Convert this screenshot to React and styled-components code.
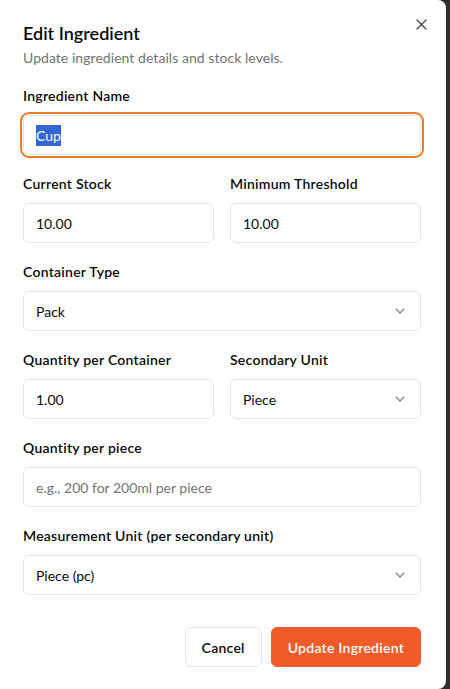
import React from "react";
import styled, { createGlobalStyle } from "styled-components";

const Global = createGlobalStyle`
  html, body { margin: 0; padding: 0; height: 100%; overflow: hidden; }
  body { background: #2e2e2e; font-family: Lato, "Liberation Sans", sans-serif; }
  * { box-sizing: border-box; }
`;

const Page = styled.div`
  display: flex;
  align-items: flex-start;
  height: 689px;
`;

const Dialog = styled.div`
  position: relative;
  width: 446px;
  height: 689px;
  background: #ffffff;
  border-radius: 0 8px 8px 0;
  padding: 24px 25px 22px 23px;
  display: flex;
  flex-direction: column;
`;

const Close = styled.button`
  position: absolute;
  top: 16px;
  right: 17px;
  width: 16px;
  height: 16px;
  padding: 0;
  border: 0;
  background: transparent;
  display: flex;
  align-items: center;
  justify-content: center;
  color: #4a4a4a;
  cursor: pointer;
`;

const Title = styled.h2`
  margin: 0;
  font-size: 18px;
  line-height: 18px;
  font-weight: 600;
  color: #0a0a0a;
`;

const Subtitle = styled.p`
  margin: 6px 0 0;
  font-size: 14px;
  line-height: 20px;
  color: #737373;
  letter-spacing: 0.05px;
`;

const Form = styled.div`
  margin-top: 18px;
  display: flex;
  flex-direction: column;
  gap: 19px;
`;

const Row = styled.div`
  display: grid;
  grid-template-columns: 1fr 1fr;
  gap: 16px;
`;

const Field = styled.div`
  display: flex;
  flex-direction: column;
  gap: 9px;
`;

const Label = styled.label`
  font-size: 14px;
  line-height: 20px;
  font-weight: 600;
  color: #0a0a0a;
  letter-spacing: 0.25px;
`;

const Box = styled.div`
  height: 40px;
  border: 1px solid #e5e5e5;
  border-radius: 6px;
  background: #fff;
  padding: 0 12px;
  display: flex;
  align-items: center;
  justify-content: space-between;
  font-size: 14px;
  color: ${(p) => (p.$placeholder ? "#737373" : "#0a0a0a")};
  box-shadow: ${(p) =>
    p.$focused ? "0 0 0 1px #fff, 0 0 0 3px #f07a1f" : "none"};
`;

const Selected = styled.span`
  background: #3367d1;
  color: #fff;
  line-height: 21px;
  display: inline-block;
`;

const Chevron = styled.svg`
  opacity: 0.5;
  flex: none;
`;

const Footer = styled.div`
  margin-top: 32px;
  display: flex;
  justify-content: flex-end;
  gap: 9px;
`;

const Button = styled.button`
  height: 40px;
  padding: 0 16px;
  border-radius: 6px;
  font-family: inherit;
  font-size: 14px;
  font-weight: 600;
  letter-spacing: 0.25px;
  border: 1px solid ${(p) => (p.$primary ? "#f15a29" : "#e5e5e5")};
  background: ${(p) => (p.$primary ? "#f15a29" : "#fff")};
  color: ${(p) => (p.$primary ? "#fff" : "#0a0a0a")};
  cursor: pointer;
`;

const ChevronDown = () => (
  <Chevron width="16" height="16" viewBox="0 0 24 24" fill="none" stroke="#0a0a0a" strokeWidth="2" strokeLinecap="round" strokeLinejoin="round">
    <path d="m6 9 6 6 6-6" />
  </Chevron>
);

const Select = ({ value }) => (
  <Box>
    <span>{value}</span>
    <ChevronDown />
  </Box>
);

export default function App() {
  return (
    <>
      <Global />
      <Page>
        <Dialog>
          <Close aria-label="Close">
            <svg width="11" height="11" viewBox="0 0 11 11" fill="none" stroke="currentColor" strokeWidth="1.4" strokeLinecap="round">
              <path d="M1 1l9 9M10 1l-9 9" />
            </svg>
          </Close>
          <Title>Edit Ingredient</Title>
          <Subtitle>Update ingredient details and stock levels.</Subtitle>
          <Form>
            <Field>
              <Label>Ingredient Name</Label>
              <Box $focused>
                <span><Selected>Cup</Selected></span>
              </Box>
            </Field>
            <Row>
              <Field>
                <Label>Current Stock</Label>
                <Box>10.00</Box>
              </Field>
              <Field>
                <Label>Minimum Threshold</Label>
                <Box>10.00</Box>
              </Field>
            </Row>
            <Field>
              <Label>Container Type</Label>
              <Select value="Pack" />
            </Field>
            <Row>
              <Field>
                <Label>Quantity per Container</Label>
                <Box>1.00</Box>
              </Field>
              <Field>
                <Label>Secondary Unit</Label>
                <Select value="Piece" />
              </Field>
            </Row>
            <Field>
              <Label>Quantity per piece</Label>
              <Box $placeholder>e.g., 200 for 200ml per piece</Box>
            </Field>
            <Field>
              <Label>Measurement Unit (per secondary unit)</Label>
              <Select value="Piece (pc)" />
            </Field>
          </Form>
          <Footer>
            <Button>Cancel</Button>
            <Button $primary>Update Ingredient</Button>
          </Footer>
        </Dialog>
      </Page>
    </>
  );
}
